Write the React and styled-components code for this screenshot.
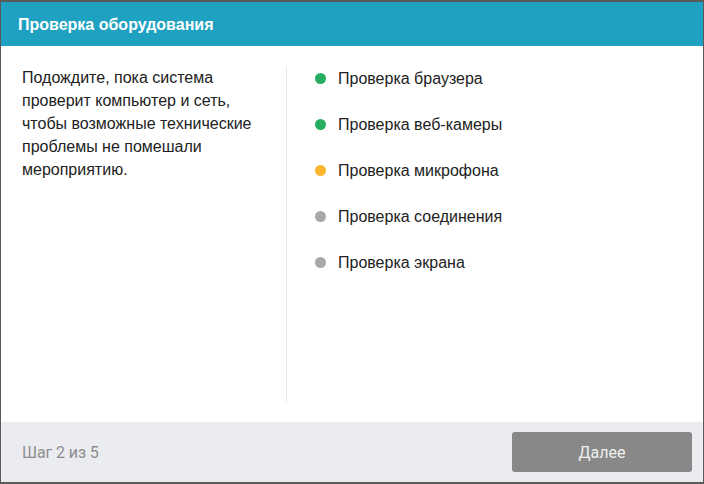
import React from "react";
import styled, { createGlobalStyle } from "styled-components";

const GlobalStyle = createGlobalStyle`
  html, body {
    margin: 0;
    padding: 0;
    background: #5a5a5a;
  }
  * { box-sizing: border-box; }
`;

const checks = [
  { label: "Проверка браузера", status: "done" },
  { label: "Проверка веб-камеры", status: "done" },
  { label: "Проверка микрофона", status: "active" },
  { label: "Проверка соединения", status: "pending" },
  { label: "Проверка экрана", status: "pending" },
];

const dotColors = {
  done: "#27ae60",
  active: "#fbb52f",
  pending: "#a8a8a8",
};

export default function App() {
  return (
    <>
      <GlobalStyle />
      <Dialog>
        <Header>Проверка оборудования</Header>
        <Body>
          <Intro>
            Подождите, пока система
            <br />
            проверит компьютер и сеть,
            <br />
            чтобы возможные технические
            <br />
            проблемы не помешали
            <br />
            мероприятию.
          </Intro>
          <CheckList>
            {checks.map((c) => (
              <CheckItem key={c.label}>
                <Dot $status={c.status} />
                {c.label}
              </CheckItem>
            ))}
          </CheckList>
        </Body>
        <Footer>
          <Step>Шаг 2 из 5</Step>
          <NextButton>Далее</NextButton>
        </Footer>
      </Dialog>
    </>
  );
}

const Dialog = styled.div`
  width: 704px;
  height: 484px;
  display: flex;
  flex-direction: column;
  border: 1px solid #5a5a5a;
  border-top-width: 2px;
  border-bottom-width: 2px;
  background: #fff;
  font-family: "Liberation Sans", Arial, sans-serif;
`;

const Header = styled.div`
  height: 44px;
  background: #1fa1c1;
  color: #fff;
  font-size: 16px;
  font-weight: bold;
  display: flex;
  align-items: center;
  padding: 0 17px;
  padding-top: 1px;
`;

const Body = styled.div`
  flex: 1;
  display: grid;
  grid-template-columns: 286px 1fr;
  padding: 20px 0 20px 0;
`;

const Intro = styled.p`
  margin: 0;
  padding: 0 0 0 21px;
  font-size: 16px;
  line-height: 23px;
  color: #222;
  border-right: 1px solid #ebebeb;
`;

const CheckList = styled.ul`
  list-style: none;
  margin: 0;
  padding: 1px 0 0 28px;
  display: flex;
  flex-direction: column;
  gap: 23px;
`;

const CheckItem = styled.li`
  display: flex;
  align-items: center;
  gap: 12px;
  height: 23px;
  font-size: 16px;
  color: #222;
`;

const Dot = styled.span`
  width: 11px;
  height: 11px;
  border-radius: 50%;
  background: ${(p) => dotColors[p.$status]};
  flex-shrink: 0;
`;

const Footer = styled.div`
  height: 60px;
  background: #ebecf0;
  display: flex;
  align-items: center;
  justify-content: space-between;
  padding: 0 11px 0 21px;
`;

const Step = styled.span`
  font-family: Roboto, "Liberation Sans", sans-serif;
  font-size: 16px;
  color: #8e8e8e;
  letter-spacing: -0.1px;
`;

const NextButton = styled.button`
  width: 180px;
  height: 40px;
  border: none;
  border-radius: 3px;
  background: #888;
  color: #f0f0f0;
  font-family: Roboto, "Liberation Sans", sans-serif;
  font-size: 16px;
`;
